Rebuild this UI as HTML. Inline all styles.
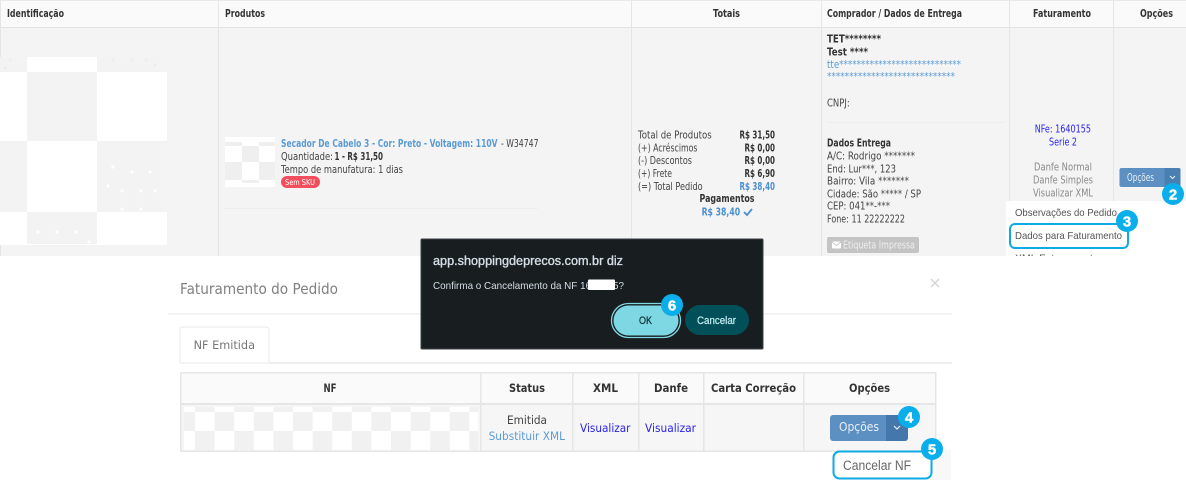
<!DOCTYPE html>
<html lang="pt-BR"><head><meta charset="utf-8"><title>Faturamento</title>
<style>
html,body{margin:0;padding:0;background:#fff;width:1186px;height:484px;overflow:hidden}
svg{display:block;position:absolute;left:0;top:0}
#root{filter:blur(.3px)}
text{font-family:"DejaVu Sans","Liberation Sans",sans-serif;font-size:10.5px;fill:#444;white-space:pre}
.b{font-weight:700;fill:#333}
.blue{fill:#5b9bd5}
.bb{font-weight:700;fill:#4a8fd0}
.nf{fill:#2a22ee}
.g{fill:#8a8a8a}
.a{font-family:"Liberation Sans",sans-serif}
.n{font-family:"Liberation Sans",sans-serif;font-weight:700;font-size:15px;fill:#fff;stroke:#fff;stroke-width:.4;text-anchor:middle}
</style></head><body>
<svg id="root" width="1186" height="484" viewBox="0 0 1186 484" xmlns="http://www.w3.org/2000/svg">
<defs>
<pattern id="p1" patternUnits="userSpaceOnUse" x="175.4" y="0" width="39.2" height="60"><rect width="39.2" height="60" fill="#fff"/><rect width="19.6" height="60" fill="#f1f1f1"/></pattern>
<pattern id="p2" patternUnits="userSpaceOnUse" x="195" y="0" width="39.2" height="60"><rect width="39.2" height="60" fill="#fff"/><rect width="19.6" height="60" fill="#f1f1f1"/></pattern>
</defs>
<rect width="1186" height="484" fill="#fff"/>

<!-- tabela superior -->
<rect x="0" y="0" width="1186" height="28" fill="#fafafa"/>
<rect x="0" y="0" width="1186" height="1" fill="#e8e8e8"/>
<rect x="0" y="27" width="1186" height="1" fill="#e2e2e2"/>
<rect x="0" y="28" width="1186" height="228" fill="#f4f4f4"/>
<g fill="#e6e6e6">
<rect x="218" y="0" width="1" height="256"/><rect x="631" y="0" width="1" height="256"/>
<rect x="821" y="0" width="1" height="256"/><rect x="1009" y="0" width="1" height="256"/>
<rect x="1113" y="0" width="1" height="256"/><rect x="0" y="0" width="1" height="57"/><rect x="0" y="245" width="1" height="11"/>
</g>
<text class="b" x="7" y="17" textLength="57" lengthAdjust="spacingAndGlyphs">Identificação</text>
<text class="b" x="225" y="17" textLength="40" lengthAdjust="spacingAndGlyphs">Produtos</text>
<text class="b" x="713" y="17" textLength="27" lengthAdjust="spacingAndGlyphs">Totais</text>
<text class="b" x="827" y="17" textLength="135" lengthAdjust="spacingAndGlyphs">Comprador / Dados de Entrega</text>
<text class="b" x="1033" y="17" textLength="58" lengthAdjust="spacingAndGlyphs">Faturamento</text>
<text class="b" x="1140" y="17" textLength="33" lengthAdjust="spacingAndGlyphs">Opções</text>

<!-- xadrez grande -->
<rect x="0" y="57" width="167" height="188" fill="#fff"/>
<g fill="#f3f3f3">
<rect x="0" y="57" width="27" height="15"/><rect x="97" y="57" width="70" height="15"/>
<rect x="27" y="72" width="70" height="69"/>
<rect x="0" y="141" width="27" height="71"/><rect x="97" y="141" width="70" height="71"/>
<rect x="27" y="212" width="70" height="32"/>
</g>
<g fill="#fff">
<circle cx="113" cy="167" r="1.6"/><circle cx="132" cy="172" r="1.6"/><circle cx="150" cy="172" r="1.6"/>
<circle cx="108" cy="186" r="1.6"/><circle cx="122" cy="191" r="1.6"/><circle cx="141" cy="191" r="1.6"/><circle cx="155" cy="191" r="1.6"/>
<circle cx="122" cy="209" r="1.6"/><circle cx="141" cy="209" r="1.6"/>
<circle cx="38" cy="232" r="1.6"/><circle cx="57" cy="232" r="1.6"/><circle cx="76" cy="232" r="1.6"/><circle cx="89" cy="242" r="1.6"/>
</g>
<g fill="#ececec"><circle cx="10" cy="60" r="1.4"/><circle cx="5" cy="68" r="1.4"/><circle cx="113" cy="60" r="1.4"/><circle cx="132" cy="60" r="1.4"/><circle cx="146" cy="60" r="1.4"/><circle cx="155" cy="65" r="1.4"/></g>

<!-- produto -->
<rect x="225" y="137" width="50" height="50" fill="#fff"/>
<g fill="#efefef">
<rect x="225" y="142" width="17" height="4"/><rect x="259" y="142" width="16" height="4"/>
<rect x="242" y="146" width="17" height="16"/>
<rect x="225" y="162" width="17" height="18"/><rect x="259" y="162" width="16" height="18"/>
<rect x="242" y="180" width="17" height="3"/>
</g>
<text class="b blue" x="281" y="147" textLength="216.5" lengthAdjust="spacingAndGlyphs" style="fill:#5b9bd5">Secador De Cabelo 3 - Cor: Preto - Voltagem: 110V</text>
<text x="498.500" y="147" textLength="40" lengthAdjust="spacingAndGlyphs"> - W34747</text>
<text x="281" y="160" textLength="52" lengthAdjust="spacingAndGlyphs">Quantidade:</text>
<text class="b" x="334.500" y="160" textLength="48.500" lengthAdjust="spacingAndGlyphs">1 - R$ 31,50</text>
<text x="281" y="173" textLength="122" lengthAdjust="spacingAndGlyphs">Tempo de manufatura: 1 dias</text>
<rect x="281" y="176" width="39" height="12" rx="6" fill="#f24e5c"/>
<text x="285" y="185" textLength="30" lengthAdjust="spacingAndGlyphs" style="fill:#fff;font-size:8px">Sem SKU</text>
<rect x="224" y="208" width="314" height="1" fill="#eeeeee"/>

<!-- totais -->
<text x="638" y="138.500" textLength="73.700" lengthAdjust="spacingAndGlyphs">Total de Produtos</text>
<text x="638" y="151.500" textLength="59.500" lengthAdjust="spacingAndGlyphs">(+) Acréscimos</text>
<text x="638" y="164" textLength="54" lengthAdjust="spacingAndGlyphs">(-) Descontos</text>
<text x="638" y="177" textLength="34" lengthAdjust="spacingAndGlyphs">(+) Frete</text>
<text x="638" y="190" textLength="64.600" lengthAdjust="spacingAndGlyphs">(=) Total Pedido</text>
<text class="b" x="739.500" y="138.500" textLength="35.500" lengthAdjust="spacingAndGlyphs">R$ 31,50</text>
<text class="b" x="744.500" y="151.500" textLength="30.500" lengthAdjust="spacingAndGlyphs">R$ 0,00</text>
<text class="b" x="744.500" y="164" textLength="30.500" lengthAdjust="spacingAndGlyphs">R$ 0,00</text>
<text class="b" x="744.500" y="177" textLength="30.500" lengthAdjust="spacingAndGlyphs">R$ 6,90</text>
<text class="bb" x="739.500" y="190" textLength="35.500" lengthAdjust="spacingAndGlyphs">R$ 38,40</text>
<text class="b" x="699.500" y="202" textLength="55" lengthAdjust="spacingAndGlyphs">Pagamentos</text>
<text class="bb" x="701.600" y="215.500" textLength="38.500" lengthAdjust="spacingAndGlyphs">R$ 38,40</text>
<path d="M744 212l3 3 5-6" fill="none" stroke="#4a8fd0" stroke-width="1.8"/>

<!-- comprador -->
<text class="b" x="827" y="42.500" textLength="54" lengthAdjust="spacingAndGlyphs">TET********</text>
<text class="b" x="827" y="55.500" textLength="41" lengthAdjust="spacingAndGlyphs">Test ****</text>
<text class="blue" x="827" y="68" textLength="134" lengthAdjust="spacingAndGlyphs">tte****************************</text>
<text class="blue" x="827" y="80" textLength="128" lengthAdjust="spacingAndGlyphs">*****************************</text>
<text x="827" y="106.500" textLength="22.700" lengthAdjust="spacingAndGlyphs">CNPJ:</text>
<rect x="827" y="122" width="178" height="1" fill="#eeeeee"/>
<text class="b" x="827" y="146.500" textLength="64" lengthAdjust="spacingAndGlyphs">Dados Entrega</text>
<text x="827" y="159.500" textLength="88" lengthAdjust="spacingAndGlyphs">A/C: Rodrigo *******</text>
<text x="827" y="172.500" textLength="69" lengthAdjust="spacingAndGlyphs">End: Lur***, 123</text>
<text x="827" y="184.500" textLength="82" lengthAdjust="spacingAndGlyphs">Bairro: Vila *******</text>
<text x="827" y="197.500" textLength="94" lengthAdjust="spacingAndGlyphs">Cidade: São ***** / SP</text>
<text x="827" y="209.500" textLength="63" lengthAdjust="spacingAndGlyphs">CEP: 041**-***</text>
<text x="827" y="222.500" textLength="78" lengthAdjust="spacingAndGlyphs">Fone: 11 22222222</text>
<rect x="827" y="237" width="92" height="16" rx="2" fill="#c4c4c4"/>
<rect x="832" y="241.500" width="9" height="7" rx="1" fill="#fff"/>
<path d="M832 242l4.500 3.500 4.500-3.500" fill="none" stroke="#c4c4c4" stroke-width=".8"/>
<text x="843" y="248.500" textLength="72" lengthAdjust="spacingAndGlyphs" style="fill:#eee">Etiqueta Impressa</text>

<!-- faturamento -->
<text class="nf" x="1034.700" y="132.500" textLength="56.300" lengthAdjust="spacingAndGlyphs">NFe: 1640155</text>
<text class="nf" x="1049" y="145.500" textLength="28" lengthAdjust="spacingAndGlyphs">Serie 2</text>
<text class="g" x="1034" y="170.500" textLength="58" lengthAdjust="spacingAndGlyphs">Danfe Normal</text>
<text class="g" x="1033" y="183.500" textLength="60" lengthAdjust="spacingAndGlyphs">Danfe Simples</text>
<text class="g" x="1033" y="196.500" textLength="60" lengthAdjust="spacingAndGlyphs">Visualizar XML</text>

<!-- botao opcoes -->
<rect x="1119.500" y="168" width="61" height="19" rx="2" fill="#5c90c2"/>
<path d="M1164.500 168h14a2 2 0 0 1 2 2v15a2 2 0 0 1-2 2h-14z" fill="#4a7fb2"/>
<text x="1127" y="181" textLength="27" lengthAdjust="spacingAndGlyphs" style="fill:#e8eff6">Opções</text>
<path d="M1170 176l2.500 2.500 2.500-2.500" fill="none" stroke="#e8eff6" stroke-width="1"/>

<!-- dropdown -->
<rect x="1006" y="201" width="180" height="55" fill="#fff"/>
<text class="a" x="1015" y="216" textLength="102" lengthAdjust="spacingAndGlyphs" style="font-size:10.500px;fill:#555">Observações do Pedido</text>
<text class="a" x="1015" y="239" textLength="107" lengthAdjust="spacingAndGlyphs" style="font-size:10.500px;fill:#555">Dados para Faturamento</text>
<rect x="1010" y="224" width="118" height="24" rx="5" fill="none" stroke="#0fa9e6" stroke-width="2"/>
<svg x="1000" y="250" width="186" height="6"><text class="a" x="15" y="11.500" style="font-size:10.500px;fill:#555">XML Faturamento</text></svg>

<!-- badges superiores -->
<circle cx="1173" cy="194" r="11" fill="#0aaeea"/><text class="n" x="1173" y="199.500">2</text>
<circle cx="1127" cy="221" r="11" fill="#0aaeea"/><text class="n" x="1127" y="226.500">3</text>

<!-- modal -->
<rect x="0" y="256" width="1186" height="228" fill="#fff"/>
<text x="180" y="294" textLength="158" lengthAdjust="spacingAndGlyphs" style="font-size:15px;fill:#808080">Faturamento do Pedido</text>
<rect x="168" y="313" width="784" height="1.500" fill="#f2f2f2"/>
<path d="M931 279l8 8m0-8l-8 8" stroke="#d5d5d5" stroke-width="1.500" fill="none"/>
<rect x="269" y="362" width="683" height="2" fill="#eeeeee"/>
<path d="M180 363v-33a3 3 0 0 1 3-3h83a3 3 0 0 1 3 3v33" fill="#fff" stroke="#e8e8e8" stroke-width="1"/>
<rect x="180" y="362" width="89" height="2" fill="#f4f4f4"/>
<text x="193.600" y="349" textLength="61.400" lengthAdjust="spacingAndGlyphs" style="font-size:11.500px;fill:#777">NF Emitida</text>

<!-- tabela modal -->
<rect x="180" y="373" width="756" height="31" fill="#fafafa"/>
<rect x="180" y="404" width="756" height="48" fill="#f6f6f6"/>
<rect x="184" y="407" width="294" height="5" fill="url(#p2)"/>
<rect x="184" y="412" width="294" height="19" fill="url(#p1)"/>
<rect x="184" y="431" width="294" height="19" fill="url(#p2)"/>
<g fill="#e6e6e6">
<rect x="180" y="372" width="756" height="1.500"/><rect x="180" y="403" width="756" height="2"/><rect x="180" y="450.500" width="756" height="1.500"/>
<rect x="180" y="372" width="1.500" height="80"/><rect x="480" y="372" width="1.500" height="80"/><rect x="572" y="372" width="1.500" height="80"/>
<rect x="638" y="372" width="1.500" height="80"/><rect x="703" y="372" width="1.500" height="80"/><rect x="803" y="372" width="1.500" height="80"/><rect x="935" y="372" width="1.500" height="80"/>
</g>
<g>
<text class="b" x="323.500" y="392" textLength="13" lengthAdjust="spacingAndGlyphs" style="font-size:11.500px">NF</text>
<text class="b" x="509" y="392" textLength="36" lengthAdjust="spacingAndGlyphs" style="font-size:11.500px">Status</text>
<text class="b" x="593" y="392" textLength="25" lengthAdjust="spacingAndGlyphs" style="font-size:11.500px">XML</text>
<text class="b" x="654" y="392" textLength="34" lengthAdjust="spacingAndGlyphs" style="font-size:11.500px">Danfe</text>
<text class="b" x="711" y="392" textLength="85" lengthAdjust="spacingAndGlyphs" style="font-size:11.500px">Carta Correção</text>
<text class="b" x="849" y="392" textLength="41" lengthAdjust="spacingAndGlyphs" style="font-size:11.500px">Opções</text>
<text x="507" y="424" textLength="40" lengthAdjust="spacingAndGlyphs" style="font-size:11.500px">Emitida</text>
<text class="blue" x="488.600" y="440" textLength="76.400" lengthAdjust="spacingAndGlyphs" style="font-size:11.500px">Substituir XML</text>
<text class="nf" x="580" y="432" textLength="50.500" lengthAdjust="spacingAndGlyphs" style="font-size:11.500px">Visualizar</text>
<text class="nf" x="645" y="432" textLength="51" lengthAdjust="spacingAndGlyphs" style="font-size:11.500px">Visualizar</text>
</g>
<rect x="830" y="415" width="78" height="26" rx="3" fill="#5c90c2"/>
<path d="M886 415h19a3 3 0 0 1 3 3v20a3 3 0 0 1-3 3h-19z" fill="#4478ad"/>
<text x="839" y="431" textLength="40" lengthAdjust="spacingAndGlyphs" style="font-size:12px;fill:#e8eff6">Opções</text>
<path d="M894 426l3 3 3-3" fill="none" stroke="#e8eff6" stroke-width="1.200"/>
<circle cx="909" cy="417" r="11" fill="#0aaeea"/><text class="n" x="909" y="422.500">4</text>

<!-- cancelar NF -->
<rect x="932" y="450" width="19" height="30" fill="#f8f8f8"/>
<rect x="833.500" y="451.500" width="98" height="27" rx="6" fill="#fff" stroke="#0fa9e6" stroke-width="2"/>
<text class="a" x="843" y="470" textLength="68" lengthAdjust="spacingAndGlyphs" style="font-size:13.500px;fill:#666">Cancelar NF</text>
<circle cx="932" cy="449" r="11" fill="#0aaeea"/><text class="n" x="932" y="454.500">5</text>

<!-- dialogo -->
<rect x="421" y="239" width="342" height="110" rx="1" fill="#181d20" stroke="#3c4043" stroke-width="1"/>
<text class="a" x="433" y="265" textLength="190" lengthAdjust="spacingAndGlyphs" style="font-size:13px;fill:#d5dfe6;stroke:#d5dfe6;stroke-width:.35">app.shoppingdeprecos.com.br diz</text>
<text class="a" x="433" y="289" textLength="191" lengthAdjust="spacingAndGlyphs" style="font-size:10.500px;fill:#d5dfe6">Confirma o Cancelamento da NF 16        5?</text>
<rect x="588" y="279.500" width="27" height="10.500" rx="1" fill="#fff"/>
<rect x="611.500" y="303.500" width="69" height="34" rx="17" fill="#181d20" stroke="#7dd8e4" stroke-width="1.300"/>
<rect x="613.500" y="305.500" width="65" height="30" rx="15" fill="#7dd8e4"/>
<text class="a" x="639" y="324" textLength="13" lengthAdjust="spacingAndGlyphs" style="font-size:11px;fill:#12363d;stroke:#12363d;stroke-width:.3">OK</text>
<rect x="685" y="305" width="64" height="30" rx="15" fill="#004f59"/>
<text class="a" x="697" y="324" textLength="39" lengthAdjust="spacingAndGlyphs" style="font-size:11px;fill:#bfeaf0;stroke:#bfeaf0;stroke-width:.25">Cancelar</text>
<circle cx="672" cy="305" r="11" fill="#0aaeea"/><text class="n" x="672" y="310.500">6</text>
</svg>
</body></html>
